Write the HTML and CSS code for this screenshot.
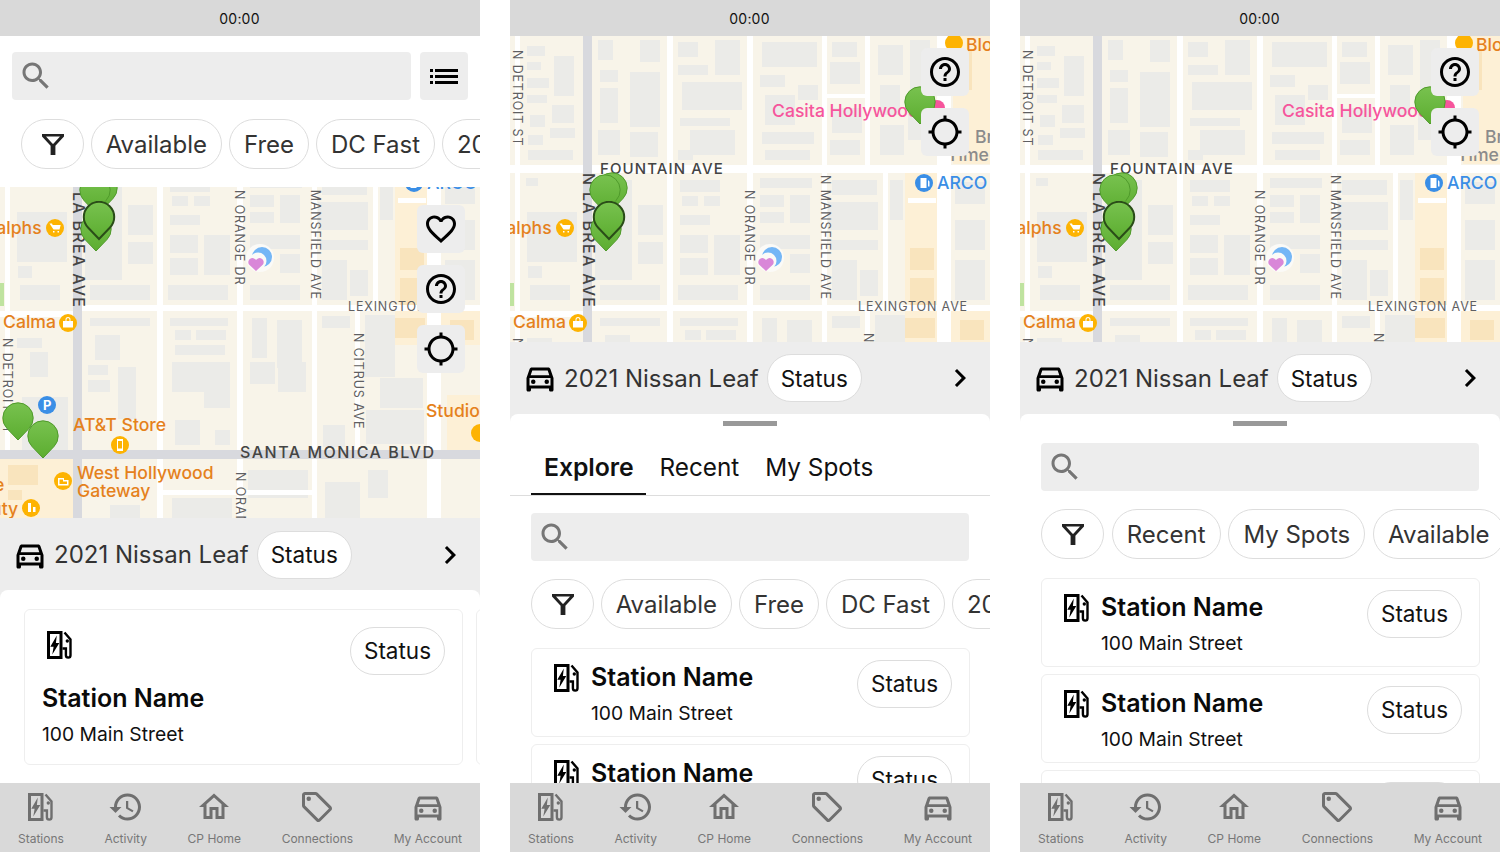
FILE: index.html
```html
<!DOCTYPE html>
<html lang="en">
<head>
<meta charset="utf-8">
<title>Stations</title>
<link rel="stylesheet" href="styles.css">
</head>
<body>
<svg class="defs" aria-hidden="true">
  <defs>
    <linearGradient id="pin-fill" x1="0" y1="0" x2="0" y2="1"><stop offset="0" stop-color="#78c24f"/><stop offset="1" stop-color="#5cad30"/></linearGradient>
  </defs>
  <symbol id="i-search" viewBox="0 0 24 24"><path d="M15.5 14h-.79l-.28-.27C15.41 12.59 16 11.11 16 9.5 16 5.91 13.09 3 9.5 3S3 5.91 3 9.5 5.91 16 9.5 16c1.61 0 3.09-.59 4.23-1.57l.27.28v.79l5 4.99L20.49 19l-4.99-5zm-6 0C7.01 14 5 11.99 5 9.5S7.01 5 9.5 5 14 7.01 14 9.5 11.99 14 9.5 14z"/></symbol>
  <symbol id="i-list" viewBox="0 0 28 15"><path d="M0 0h3v3H0zM5 0h23v3H5zM0 6h3v3H0zM5 6h23v3H5zM0 12h3v3H0zM5 12h23v3H5z"/></symbol>
  <symbol id="i-filter" viewBox="0 0 24 24"><path d="M1 2h22v2.6l-8.6 9.2V23H9.6v-9.2L1 4.6zM5 4.6l6.6 7.2h.8L19 4.6z" fill-rule="evenodd"/></symbol>
  <symbol id="i-heart" viewBox="0 0 24 24"><path d="M16.5 3c-1.74 0-3.41.81-4.5 2.09C10.91 3.81 9.24 3 7.5 3 4.42 3 2 5.42 2 8.5c0 3.78 3.4 6.86 8.55 11.54L12 21.35l1.45-1.32C18.6 15.36 22 12.28 22 8.5 22 5.42 19.58 3 16.5 3zm-4.4 15.55l-.1.1-.1-.1C7.14 14.24 4 11.39 4 8.5 4 6.5 5.5 5 7.5 5c1.54 0 3.04.99 3.57 2.36h1.87C13.46 5.99 14.96 5 16.5 5c2 0 3.5 1.5 3.5 3.5 0 2.89-3.14 5.74-7.9 10.05z"/></symbol>
  <symbol id="i-help" viewBox="0 0 24 24"><path d="M11 18h2v-2h-2v2zm1-16C6.48 2 2 6.48 2 12s4.48 10 10 10 10-4.48 10-10S17.52 2 12 2zm0 18c-4.41 0-8-3.59-8-8s3.59-8 8-8 8 3.59 8 8-3.59 8-8 8zm0-14c-2.21 0-4 1.79-4 4h2c0-1.1.9-2 2-2s2 .9 2 2c0 2-3 1.75-3 5h2c0-2.25 3-2.5 3-5 0-2.21-1.79-4-4-4z"/></symbol>
  <symbol id="i-gps" viewBox="0 0 24 24"><path d="M20.94 11c-.46-4.17-3.77-7.48-7.94-7.94V1h-2v2.06C6.83 3.52 3.52 6.83 3.06 11H1v2h2.06c.46 4.17 3.77 7.48 7.94 7.94V23h2v-2.06c4.17-.46 7.48-3.77 7.94-7.94H23v-2h-2.06zM12 19c-3.87 0-7-3.13-7-7s3.13-7 7-7 7 3.13 7 7-3.13 7-7 7z"/></symbol>
  <symbol id="i-car" viewBox="0 0 24 24"><path d="M18.92 6.01C18.72 5.42 18.16 5 17.5 5h-11c-.66 0-1.21.42-1.42 1.01L3 12v8c0 .55.45 1 1 1h1c.55 0 1-.45 1-1v-1h12v1c0 .55.45 1 1 1h1c.55 0 1-.45 1-1v-8l-2.08-5.99zM6.85 7h10.29l1.08 3.11H5.77L6.85 7zM19 17H5v-5h14v5z"/><circle cx="7.5" cy="14.5" r="1.5"/><circle cx="16.5" cy="14.5" r="1.5"/></symbol>
  <symbol id="i-chevron" viewBox="0 0 24 24"><path d="M10 6L8.59 7.41 13.17 12l-4.58 4.59L10 18l6-6z"/></symbol>
  <symbol id="i-history" viewBox="0 0 24 24"><path d="M13 3c-4.97 0-9 4.03-9 9H1l3.89 3.89.07.14L9 12H6c0-3.87 3.13-7 7-7s7 3.13 7 7-3.13 7-7 7c-1.93 0-3.68-.79-4.94-2.06l-1.42 1.42C8.27 19.99 10.51 21 13 21c4.97 0 9-4.03 9-9s-4.03-9-9-9zm-1 5v5l4.28 2.54.72-1.21-3.5-2.08V8H12z"/></symbol>
  <symbol id="i-home" viewBox="0 0 24 24"><path d="M12 5.69l5 4.5V18h-2v-6H9v6H7v-7.81l5-4.5M12 3L2 12h3v8h6v-6h2v6h6v-8h3L12 3z"/></symbol>
  <symbol id="i-tag" viewBox="0 0 24 24"><path d="M21.41 11.58l-9-9C12.05 2.22 11.55 2 11 2H4c-1.1 0-2 .9-2 2v7c0 .55.22 1.05.59 1.42l9 9c.36.36.86.58 1.41.58s1.05-.22 1.41-.59l7-7c.37-.36.59-.86.59-1.41s-.23-1.06-.59-1.42zM13 20.01L4 11V4h7v-.01l9 9-7 7.02z"/><circle cx="6.5" cy="6.5" r="1.5"/></symbol>
  <symbol id="i-station" viewBox="0 0 25 28">
    <path d="M0 0h15.500v28H0zM3 3v22h9.500V3z" fill-rule="evenodd"/>
    <path d="M9.800 4.500 3.300 15.800h3.300L5.300 23.500 12.300 12H8.900z"/>
    <path class="hose" d="M17.500 1.500 23.500 8.500V24.300a2.300 2.300 0 0 1-4.600 0V17.500H15.500"/>
    <circle cx="20.300" cy="10" r="1.700"/>
  </symbol>
  <symbol id="pin" viewBox="0 0 34 40"><path d="M17 38 6 26.500A15.200 15.200 0 1 1 28 26.500Z"/></symbol>

  <symbol id="map" viewBox="0 36 480 482">
    <rect class="m-land" x="0" y="36" width="480" height="482"/>
    <rect class="m-tan" x="395" y="173" width="32" height="172"/>
    <rect class="m-tan" x="443" y="36" width="37" height="128"/>
    <rect class="m-tan" x="441" y="311" width="39" height="34"/>
    <rect class="m-tan" x="447" y="395" width="33" height="55"/>
    <rect class="m-tan" x="0" y="459" width="73" height="59"/>
    <rect class="m-green" x="0" y="283" width="4" height="23"/>
    <g class="m-bld">
      <rect x="17" y="46" width="18" height="10"/><rect x="44" y="56" width="20" height="40"/><rect x="17" y="62" width="14" height="8"/><rect x="17" y="78" width="22" height="10"/><rect x="17" y="95" width="20" height="8"/><rect x="20" y="115" width="15" height="12"/><rect x="42" y="105" width="22" height="18"/><rect x="18" y="135" width="15" height="10"/><rect x="40" y="128" width="25" height="10"/><rect x="18" y="150" width="45" height="10"/>
      <rect x="88" y="40" width="15" height="20"/><rect x="130" y="40" width="20" height="22"/><rect x="120" y="72" width="30" height="55"/><rect x="90" y="70" width="18" height="12"/><rect x="90" y="88" width="18" height="35"/><rect x="88" y="130" width="22" height="25"/><rect x="120" y="132" width="28" height="25"/>
      <rect x="168" y="42" width="20" height="15"/><rect x="205" y="40" width="25" height="35"/><rect x="168" y="65" width="30" height="10"/><rect x="172" y="82" width="60" height="28"/><rect x="170" y="118" width="50" height="8"/><rect x="180" y="130" width="45" height="25"/><rect x="168" y="150" width="15" height="10"/>
      <rect x="252" y="42" width="55" height="25"/><rect x="250" y="75" width="25" height="12"/><rect x="255" y="95" width="30" height="30"/><rect x="288" y="85" width="20" height="15"/><rect x="252" y="132" width="52" height="12"/><rect x="255" y="150" width="45" height="10"/>
      <rect x="322" y="42" width="25" height="15"/><rect x="320" y="62" width="30" height="22"/><rect x="322" y="108" width="30" height="25"/><rect x="320" y="140" width="30" height="15"/>
      <rect x="368" y="45" width="25" height="30"/><rect x="400" y="40" width="20" height="50"/><rect x="370" y="85" width="20" height="30"/><rect x="398" y="100" width="22" height="40"/><rect x="370" y="125" width="24" height="30"/>
      <rect x="16" y="178" width="12" height="8"/><rect x="17" y="212" width="50" height="50"/><rect x="18" y="266" width="14" height="12"/><rect x="20" y="285" width="40" height="15"/>
      <rect x="85" y="180" width="37" height="100"/><rect x="128" y="205" width="25" height="30"/><rect x="128" y="242" width="25" height="22"/><rect x="90" y="285" width="60" height="15"/>
      <rect x="170" y="180" width="40" height="12"/><rect x="172" y="196" width="16" height="10"/><rect x="194" y="196" width="16" height="10"/><rect x="170" y="215" width="30" height="10"/><rect x="170" y="235" width="28" height="18"/><rect x="204" y="235" width="26" height="40"/><rect x="170" y="258" width="28" height="17"/><rect x="168" y="285" width="60" height="15"/>
      <rect x="250" y="178" width="52" height="10"/><rect x="250" y="195" width="24" height="12"/><rect x="280" y="195" width="20" height="28"/><rect x="250" y="212" width="24" height="11"/><rect x="250" y="235" width="50" height="14"/><rect x="280" y="254" width="20" height="19"/><rect x="250" y="285" width="50" height="15"/>
      <rect x="322" y="180" width="45" height="15"/><rect x="318" y="202" width="50" height="28"/><rect x="320" y="240" width="48" height="10"/><rect x="322" y="260" width="25" height="40"/><rect x="350" y="270" width="18" height="26"/>
      <rect x="380" y="180" width="13" height="40"/><rect x="445" y="182" width="30" height="22"/><rect x="445" y="220" width="30" height="30"/><rect x="445" y="260" width="30" height="40"/>
      <rect x="17" y="338" width="25" height="10"/><rect x="30" y="352" width="18" height="25"/><rect x="22" y="397" width="46" height="53"/>
      <rect x="90" y="318" width="60" height="8"/><rect x="95" y="335" width="25" height="25"/><rect x="88" y="365" width="20" height="10"/><rect x="118" y="367" width="18" height="52"/><rect x="88" y="380" width="22" height="12"/>
      <rect x="170" y="318" width="58" height="8"/><rect x="175" y="330" width="16" height="10"/><rect x="196" y="330" width="30" height="10"/><rect x="175" y="345" width="50" height="10"/><rect x="172" y="362" width="58" height="30"/><rect x="204" y="386" width="26" height="22"/><rect x="175" y="420" width="25" height="25"/><rect x="215" y="430" width="15" height="15"/>
      <rect x="252" y="318" width="15" height="40"/><rect x="277" y="320" width="25" height="48"/><rect x="250" y="362" width="25" height="22"/><rect x="278" y="362" width="28" height="30"/>
      <rect x="322" y="316" width="28" height="12"/><rect x="323" y="425" width="22" height="22"/><rect x="365" y="315" width="30" height="62"/><rect x="380" y="378" width="43" height="30"/><rect x="366" y="410" width="58" height="34"/>
      <rect x="248" y="470" width="60" height="28"/><rect x="325" y="482" width="35" height="36"/><rect x="368" y="470" width="20" height="28"/><rect x="172" y="498" width="60" height="20"/><rect x="110" y="505" width="30" height="13"/>
    </g>
    <g class="m-tanbld">
      <rect x="400" y="248" width="24" height="22"/><rect x="400" y="278" width="24" height="28"/><rect x="450" y="50" width="12" height="40"/><rect x="450" y="320" width="24" height="20"/><rect x="395" y="318" width="30" height="20"/><rect x="8" y="465" width="30" height="20"/><rect x="8" y="490" width="14" height="10"/>
    </g>
    <g class="m-road">
      <rect x="5" y="36" width="5" height="420"/><rect x="157" y="36" width="6" height="482"/><rect x="237" y="36" width="6" height="482"/><rect x="312" y="36" width="5" height="482"/><rect x="355" y="36" width="5" height="130"/><rect x="355" y="306" width="5" height="145"/><rect x="373" y="173" width="5" height="135"/><rect x="427" y="36" width="14" height="482"/>
      <rect x="0" y="165" width="480" height="8"/><rect x="80" y="305" width="400" height="6"/><rect x="0" y="311" width="75" height="6"/><rect x="160" y="490" width="155" height="5"/><rect x="316" y="94" width="40" height="4"/><rect x="398" y="198" width="28" height="5"/>
    </g>
    <g class="m-art">
      <rect x="73" y="36" width="9" height="482"/><rect x="0" y="450" width="480" height="9"/>
    </g>
    <text class="t-street" transform="translate(3,50) rotate(90)">N DETROIT ST</text>
    <text class="t-street" transform="translate(3,338) rotate(90)">N DETROIT ST</text>
    <text class="t-street" transform="translate(235,190) rotate(90)">N ORANGE DR</text>
    <text class="t-street" transform="translate(311,175) rotate(90)">N MANSFIELD AVE</text>
    <text class="t-street" transform="translate(354,333) rotate(90)">N CITRUS AVE</text>
    <text class="t-street" transform="translate(236,472) rotate(90)">N ORANGE DR</text>
    <text class="t-street" x="348" y="311">LEXINGTON AVE</text>
    <text class="t-big" x="90" y="174">FOUNTAIN AVE</text>
    <text class="t-big t-brea" transform="translate(73,173) rotate(90)">N LA BREA AVE</text>
    <text class="t-big t-sm" x="240" y="458">SANTA MONICA BLVD</text>
    <text class="t-poi" x="-15" y="234">Ralphs</text>
    <circle class="c-y" cx="55" cy="228" r="9"/><path class="g-w" d="M49.500 223.500h2.500l.7 1.500h8l-1.200 4.500h-6zM53 231h1.500v1.500H53zM57.500 231H59v1.500h-1.500z"/>
    <text class="t-poi" x="3" y="328">Calma</text>
    <circle class="c-y" cx="68" cy="323" r="9"/><path class="g-w" d="M63 321h2.500v-1.500a2.500 2.500 0 0 1 5 0V321H73v6.500H63zM66.500 321h3v-1.500a1.500 1.500 0 0 0-3 0z" fill-rule="evenodd"/>
    <text class="t-poi" x="73" y="431">AT&amp;T Store</text>
    <circle class="c-y" cx="120" cy="445" r="9"/><path class="g-w" d="M117 439h6v12h-6zM118 441v7.500h4V441z" fill-rule="evenodd"/>
    <text class="t-poi" x="426" y="417">Studio</text>
    <circle class="c-y" cx="480" cy="433" r="9"/>
    <text class="t-poi" x="77" y="479">West Hollywood</text>
    <text class="t-poi" x="77" y="497">Gateway</text>
    <circle class="c-y" cx="63" cy="481" r="9"/><path class="g-w" d="M58 478h6v2h4.500v5.500H58zM59.500 479.500v4.500h7.500v-2.500h-4v-2z" fill-rule="evenodd"/>
    <text class="t-poi" x="-41" y="515">Beauty</text>
    <circle class="c-y" cx="31" cy="508" r="9"/><rect class="g-w" x="28" y="503" width="3" height="9"/><rect class="g-w" x="33" y="507" width="2.500" height="5"/>
    <text class="t-poi" x="-6" y="491">e</text>
    <text class="t-poi" x="456" y="51">Blo</text>
    <circle class="c-y" cx="444" cy="43" r="9"/>
    <text class="t-poi t-pink" x="262" y="117">Casita Hollywood</text>
    <text class="t-poi t-grey" x="465" y="143">Br</text>
    <text class="t-poi t-grey" x="437" y="161">Time &amp;</text>
    <circle class="c-pink" cx="427" cy="108" r="8"/>
    <text class="t-poi t-blue" x="427" y="189">ARCO</text>
    <circle class="c-b" cx="414" cy="183" r="9"/><path class="g-w" d="M410.500 178h6v10h-6zM418 180l1.500 1.500v5h-1.500z"/>
    <circle class="c-b" cx="47" cy="405" r="9"/><text class="t-p" x="43" y="410">P</text>
    <circle class="c-halo" cx="260" cy="258" r="14"/>
    <circle class="c-sky" cx="262" cy="257" r="10"/>
    <circle class="c-halo" cx="258" cy="261" r="8.500"/>
    <path class="g-heart" d="M256 271l-7-6.500a4 4 0 0 1 7-4.500a4 4 0 0 1 7 4.500z"/>
    <use href="#pin" class="p-g" fill="url(#pin-fill)" x="85" y="172" width="34" height="40"/>
    <use href="#pin" class="p-g" fill="url(#pin-fill)" x="78" y="174" width="34" height="40"/>
    <use href="#pin" class="p-g" fill="url(#pin-fill)" x="79" y="213" width="34" height="40"/>
    <use href="#pin" class="p-sel" fill="url(#pin-fill)" x="82" y="201" width="34" height="40"/>
    <use href="#pin" class="p-g" fill="url(#pin-fill)" x="393" y="86" width="34" height="40"/>
    <use href="#pin" class="p-g" fill="url(#pin-fill)" x="1" y="402" width="34" height="40"/>
    <use href="#pin" class="p-g" fill="url(#pin-fill)" x="26" y="420" width="34" height="40"/>
  </symbol>
</svg>

<main class="screens">

  <section class="phone">
    <div class="status">00:00</div>
    <div class="head">
      <div class="search-row">
        <div class="search"><svg class="ic36 grey"><use href="#i-search"/></svg></div>
        <div class="list-btn"><svg class="ic-list"><use href="#i-list"/></svg></div>
      </div>
      <div class="chips">
        <span class="chip chip-filter"><svg class="ic-filter"><use href="#i-filter"/></svg></span>
        <span class="chip">Available</span><span class="chip">Free</span><span class="chip">DC Fast</span><span class="chip">2021 Nissan Leaf</span>
      </div>
    </div>
    <div class="map map-tall">
      <svg class="map-art map-art-tall"><use href="#map"/></svg>
      <div class="tools tools-tall">
        <span class="tool"><svg class="ic36"><use href="#i-heart"/></svg></span>
        <span class="tool"><svg class="ic36"><use href="#i-help"/></svg></span>
        <span class="tool"><svg class="ic36"><use href="#i-gps"/></svg></span>
      </div>
    </div>
    <div class="vehicle vehicle-tall">
      <svg class="ic36"><use href="#i-car"/></svg>
      <span class="vehicle-name">2021 Nissan Leaf</span>
      <span class="chip chip-status chip-white">Status</span>
      <svg class="ic36 push"><use href="#i-chevron"/></svg>
    </div>
    <div class="sheet sheet-peek">
      <article class="card card-tall">
        <div class="card-top">
          <svg class="ic-station ic-station-tall"><use href="#i-station"/></svg>
          <span class="chip chip-status">Status</span>
        </div>
        <h3 class="name name-tall">Station Name</h3>
        <p class="addr">100 Main Street</p>
      </article>
      <article class="card card-tall"></article>
    </div>
    <nav class="tabbar">
      <a class="tab"><svg class="ic-tab-st"><use href="#i-station"/></svg>Stations</a>
      <a class="tab"><svg class="ic36"><use href="#i-history"/></svg>Activity</a>
      <a class="tab"><svg class="ic36"><use href="#i-home"/></svg>CP Home</a>
      <a class="tab"><svg class="ic36"><use href="#i-tag"/></svg>Connections</a>
      <a class="tab"><svg class="ic36"><use href="#i-car"/></svg>My Account</a>
    </nav>
  </section>

  <section class="phone">
    <div class="status">00:00</div>
    <div class="map map-short">
      <svg class="map-art"><use href="#map"/></svg>
      <div class="tools tools-short">
        <span class="tool"><svg class="ic36"><use href="#i-help"/></svg></span>
        <span class="tool"><svg class="ic36"><use href="#i-gps"/></svg></span>
      </div>
    </div>
    <div class="vehicle">
      <svg class="ic36"><use href="#i-car"/></svg>
      <span class="vehicle-name">2021 Nissan Leaf</span>
      <span class="chip chip-status chip-white">Status</span>
      <svg class="ic36 push"><use href="#i-chevron"/></svg>
    </div>
    <div class="sheet">
      <div class="handle"></div>
      <div class="tabs">
        <span class="tab-top tab-active">Explore</span><span class="tab-top">Recent</span><span class="tab-top">My Spots</span>
      </div>
      <div class="search search-sheet"><svg class="ic36 grey"><use href="#i-search"/></svg></div>
      <div class="chips chips-sheet">
        <span class="chip chip-filter"><svg class="ic-filter"><use href="#i-filter"/></svg></span>
        <span class="chip">Available</span><span class="chip">Free</span><span class="chip">DC Fast</span><span class="chip">2021 Nissan Leaf</span>
      </div>
      <div class="cards">
        <article class="card card-row">
          <svg class="ic-station"><use href="#i-station"/></svg>
          <div class="card-text"><h3 class="name">Station Name</h3><p class="addr">100 Main Street</p></div>
          <span class="chip chip-status">Status</span>
        </article>
        <article class="card card-row">
          <svg class="ic-station"><use href="#i-station"/></svg>
          <div class="card-text"><h3 class="name">Station Name</h3><p class="addr">100 Main Street</p></div>
          <span class="chip chip-status">Status</span>
        </article>
      </div>
    </div>
    <nav class="tabbar">
      <a class="tab"><svg class="ic-tab-st"><use href="#i-station"/></svg>Stations</a>
      <a class="tab"><svg class="ic36"><use href="#i-history"/></svg>Activity</a>
      <a class="tab"><svg class="ic36"><use href="#i-home"/></svg>CP Home</a>
      <a class="tab"><svg class="ic36"><use href="#i-tag"/></svg>Connections</a>
      <a class="tab"><svg class="ic36"><use href="#i-car"/></svg>My Account</a>
    </nav>
  </section>

  <section class="phone">
    <div class="status">00:00</div>
    <div class="map map-short">
      <svg class="map-art"><use href="#map"/></svg>
      <div class="tools tools-short">
        <span class="tool"><svg class="ic36"><use href="#i-help"/></svg></span>
        <span class="tool"><svg class="ic36"><use href="#i-gps"/></svg></span>
      </div>
    </div>
    <div class="vehicle">
      <svg class="ic36"><use href="#i-car"/></svg>
      <span class="vehicle-name">2021 Nissan Leaf</span>
      <span class="chip chip-status chip-white">Status</span>
      <svg class="ic36 push"><use href="#i-chevron"/></svg>
    </div>
    <div class="sheet">
      <div class="handle"></div>
      <div class="search search-sheet"><svg class="ic36 grey"><use href="#i-search"/></svg></div>
      <div class="chips chips-sheet chips-wide">
        <span class="chip chip-filter"><svg class="ic-filter"><use href="#i-filter"/></svg></span>
        <span class="chip">Recent</span><span class="chip">My Spots</span><span class="chip">Available</span><span class="chip">Free</span>
      </div>
      <div class="cards">
        <article class="card card-row">
          <svg class="ic-station"><use href="#i-station"/></svg>
          <div class="card-text"><h3 class="name">Station Name</h3><p class="addr">100 Main Street</p></div>
          <span class="chip chip-status">Status</span>
        </article>
        <article class="card card-row">
          <svg class="ic-station"><use href="#i-station"/></svg>
          <div class="card-text"><h3 class="name">Station Name</h3><p class="addr">100 Main Street</p></div>
          <span class="chip chip-status">Status</span>
        </article>
        <article class="card card-row">
          <svg class="ic-station"><use href="#i-station"/></svg>
          <div class="card-text"><h3 class="name">Station Name</h3><p class="addr">100 Main Street</p></div>
          <span class="chip chip-status">Status</span>
        </article>
      </div>
    </div>
    <nav class="tabbar">
      <a class="tab"><svg class="ic-tab-st"><use href="#i-station"/></svg>Stations</a>
      <a class="tab"><svg class="ic36"><use href="#i-history"/></svg>Activity</a>
      <a class="tab"><svg class="ic36"><use href="#i-home"/></svg>CP Home</a>
      <a class="tab"><svg class="ic36"><use href="#i-tag"/></svg>Connections</a>
      <a class="tab"><svg class="ic36"><use href="#i-car"/></svg>My Account</a>
    </nav>
  </section>

</main>
</body>
</html>
```

FILE: styles.css
```css
* { box-sizing: border-box; }
html, body { margin: 0; padding: 0; background: #fff; }
body { font-family: Inter, "Liberation Sans", sans-serif; color: #111; overflow: hidden; }
h3, p { margin: 0; }
.defs { position: absolute; width: 0; height: 0; overflow: hidden; }

.screens { display: flex; gap: 30px; width: 1500px; height: 852px; }
.phone { width: 480px; height: 852px; flex: none; display: flex; flex-direction: column; overflow: hidden; background: #ededed; }

.status { height: 36px; flex: none; background: #d9d9d9; display: flex; align-items: center; justify-content: center; font-size: 14px; letter-spacing: .2px; color: #111; padding-right: 1px; }

.head { flex: none; height: 151px; background: #fff; padding-top: 16px; }
.search-row { display: flex; gap: 9px; padding: 0 12px; }
.search { flex: 1; height: 48px; background: #ededed; border-radius: 4px; display: flex; align-items: center; padding-left: 6px; }
.list-btn { width: 48px; height: 48px; background: #ededed; border-radius: 4px; display: flex; align-items: center; justify-content: center; }

.ic36 { width: 36px; height: 36px; flex: none; fill: #000; display: block; }
.grey { fill: #767676; }
.ic-list { width: 28px; height: 15px; fill: #000; }
.ic-filter { width: 24px; height: 24px; fill: #222; }

.chips { display: flex; gap: 6.500px; margin-top: 19px; padding-left: 21px; overflow: hidden; }
.chips-wide { gap: 7.500px; }
.chip { flex: none; height: 50px; border: 1.5px solid #ddd; border-radius: 25px; background: #fff; display: inline-flex; align-items: center; justify-content: center; padding: 0 14.200px; font-size: 24px; color: #333; white-space: nowrap; }
.chip-filter { width: 63px; padding: 0; }
.chip-status { height: 48px; width: 95px; padding: 0; font-size: 22.500px; color: #111; border-radius: 24px; }
.chip-white { background: #fff; }

.map { position: relative; overflow: hidden; flex: none; }
.map-tall { height: 332px; }
.map-short { height: 306px; }
.map-art { display: block; width: 480px; height: 482px; }
.map-art-tall { margin-top: -151px; }
.tools { position: absolute; display: flex; flex-direction: column; gap: 12px; }
.tools-tall { top: 18px; right: 15px; }
.tools-short { top: 12px; right: 21px; }
.tool { width: 48px; height: 48px; background: #ededed; border-radius: 6px; display: flex; align-items: center; justify-content: center; }

.vehicle { flex: none; height: 72px; background: #ededed; display: flex; align-items: center; padding: 0 12px; }
.vehicle-tall { height: 71px; }
.vehicle-name { margin-left: 6px; font-size: 24px; color: #333; white-space: nowrap; }
.vehicle .chip { margin-left: 8px; }
.push { margin-left: auto; }

.sheet { flex: 1; min-height: 0; background: #fff; border-radius: 8px 8px 0 0; overflow: hidden; }
.sheet-peek { display: flex; gap: 13px; padding: 19px 0 0 24px; }
.handle { width: 54px; height: 5px; background: #999; margin: 7px auto 0; }

.tabs { display: flex; height: 70px; padding-left: 21px; border-bottom: 1.5px solid #ddd; }
.tab-top { height: 70px; padding: 26px 13px 0; font-size: 24.300px; line-height: 30px; color: #111; white-space: nowrap; }
.tab-active { font-size: 24.800px; font-weight: 600; letter-spacing: -.1px; border-bottom: 2px solid #111; height: 69px; }

.search-sheet { flex: none; margin: 17px 21px 0; height: 48px; }
.chips-sheet { margin-top: 18px; }

.cards { display: flex; flex-direction: column; gap: 7px; margin: 19px 0 0 21px; width: 439px; }
.card { flex: none; width: 439px; border: 1.5px solid #eee; border-radius: 6px; background: #fff; }
.card-row { height: 89px; display: flex; padding: 10.500px 17px 0 22px; }
.card-text { flex: 1; margin-left: 12px; padding-top: 2px; }
.card-tall { height: 156px; padding: 16.500px 17px 0 17px; }
.card-top { display: flex; justify-content: space-between; align-items: flex-start; }

.ic-station { width: 25px; height: 28px; flex: none; fill: #000; margin-top: 4px; color: #000; }
.ic-station-tall { margin: 4px 0 0 5px; }
.ic-tab-st { width: 25px; height: 28px; fill: #6f6f6f; color: #6f6f6f; margin: 4px 0 0; display: block; }
.hose { fill: none; stroke: currentColor; stroke-width: 2.400px; }

.name { font-size: 25px; line-height: 30px; font-weight: 600; color: #0a0a0a; white-space: nowrap; }
.name-tall { margin-top: 8px; }
.addr { margin-top: 6px; font-size: 19.300px; line-height: 30px; color: #111; white-space: nowrap; }

.tabbar { flex: none; height: 69px; background: #d9d9d9; display: flex; justify-content: space-between; padding: 6px 18px 0; }
.tab { display: flex; flex-direction: column; align-items: center; font-size: 12px; line-height: 16px; color: #777; white-space: nowrap; }
.tab .ic36 { fill: #6f6f6f; margin-bottom: 6px; }
.tab .ic-tab-st { margin-bottom: 10px; }

/* map art */
.m-land { fill: #f8f4e9; }
.m-tan { fill: #fdf0d6; }
.m-green { fill: #bfe3a0; }
.m-bld { fill: #ebebe8; }
.m-tanbld { fill: #f9e4bd; }
.m-road { fill: #fff; }
.m-art { fill: #d8d9de; }
.t-street { font-size: 12.500px; letter-spacing: .85px; fill: #5f5f62; }
.t-big { font-size: 15px; font-weight: 500; letter-spacing: 1.100px; fill: #444; }
.t-brea { font-size: 16px; letter-spacing: 1.300px; }
.t-sm { font-size: 16px; letter-spacing: 1.500px; }
.t-poi { font-size: 17.600px; font-weight: 500; fill: #e5811c; }
.t-pink { fill: #f6559c; }
.t-grey { fill: #8b8b8b; }
.t-blue { fill: #3a8ee6; }
.t-p { font-size: 13px; font-weight: 700; fill: #fff; }
.c-y { fill: #fdb302; }
.c-b { fill: #3a8ee6; }
.c-pink { fill: #f6559c; }
.c-halo { fill: #fbfaf7; }
.c-sky { fill: #74b6f6; }
.g-w { fill: #fff; }
.g-heart { fill: #d987d8; }
.p-g { stroke: #4f9a2b; stroke-width: 1; }
.p-sel { stroke: #2a4d18; stroke-width: 2; }
```
